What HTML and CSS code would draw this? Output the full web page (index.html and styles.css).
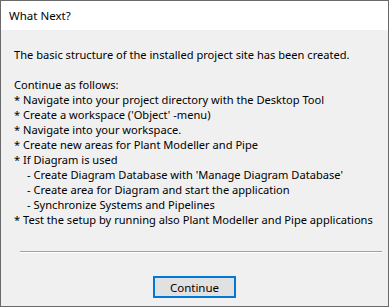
FILE: index.html
```html
<!DOCTYPE html>
<html lang="en">
<head>
  <meta charset="UTF-8" />
  <title>What Next?</title>
  <link rel="stylesheet" href="styles.css">
</head>
<body>
  <div class="dialog">
    <div class="titlebar">What Next?</div>
    <div class="content">
      <div class="message">
        <p>The basic structure of the installed project site has been created.</p>
        <p class="gap">Continue as follows:</p>
        <p>* Navigate into your project directory with the Desktop Tool</p>
        <p>* Create a workspace ('Object' -menu)</p>
        <p>* Navigate into your workspace.</p>
        <p>* Create new areas for Plant Modeller and Pipe</p>
        <p>* If Diagram is used</p>
        <p class="sub">- Create Diagram Database with 'Manage Diagram Database'</p>
        <p class="sub">- Create area for Diagram and start the application</p>
        <p class="sub">- Synchronize Systems and Pipelines</p>
        <p>* Test the setup by running also Plant Modeller and Pipe applications</p>
      </div>
      <div class="separator"></div>
      <div class="actions">
        <button class="btn btn-default">Continue</button>
      </div>
    </div>
  </div>
</body>
</html>
```

FILE: styles.css
```css
/* BASE */
* {
  margin: 0; padding: 0;
  box-sizing: border-box;
}
body {
  background: #fff;
  font-family: 'Noto Sans', sans-serif;
  font-size: 11.1px;
  color: #000;
}

/* WINDOW */
.dialog {
  width: 389px; height: 307px;
  border: 1px solid #6a6a6a;
  display: flex; flex-direction: column;
}
.titlebar {
  height: 29px;
  padding-left: 8px;
  display: flex; align-items: center;
  background: #fff;
  font-size: 11.5px;
}
.content {
  flex: 1;
  background: #f0f0f0;
  display: flex; flex-direction: column;
}

/* MESSAGE */
.message {
  line-height: 15px;
  padding: 17px 0 0 13px;
  white-space: nowrap;
}
.message .gap { margin-top: 15px; }
.message .sub { padding-left: 13px; }

/* SEPARATOR */
.separator {
  margin: 24px 6px 0 19px;
  height: 2px;
  border-top: 1px solid #a0a0a0;
  border-bottom: 1px solid #fff;
}

/* BUTTONS */
.actions {
  display: flex; justify-content: center;
  padding-top: 23px;
}
.btn {
  width: 83px; height: 22px;
  font: inherit;
  font-size: 11.5px;
  background: #e1e1e1;
  border: 2px solid #0078d7;
  color: #000;
}
```
